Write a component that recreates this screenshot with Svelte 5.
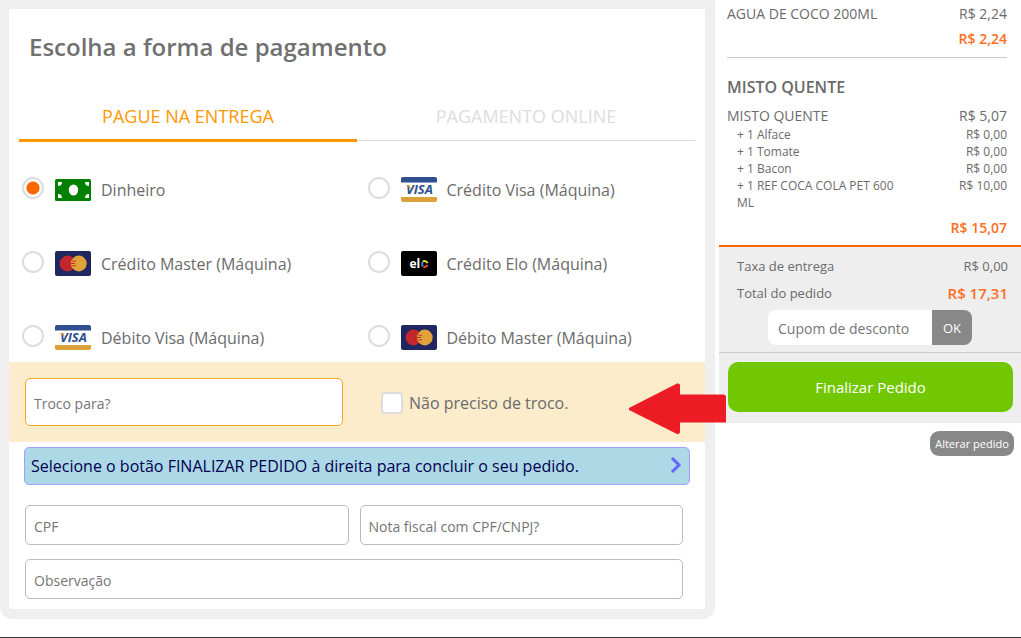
<script>
  const options = [
    { id: "dinheiro", label: "Dinheiro", brand: "cash" },
    { id: "credito-visa", label: "Crédito Visa (Máquina)", brand: "visa" },
    { id: "credito-master", label: "Crédito Master (Máquina)", brand: "master" },
    { id: "credito-elo", label: "Crédito Elo (Máquina)", brand: "elo" },
    { id: "debito-visa", label: "Débito Visa (Máquina)", brand: "visa" },
    { id: "debito-master", label: "Débito Master (Máquina)", brand: "master" },
  ];

  const extras = [
    { name: "+ 1 Alface", price: 0 },
    { name: "+ 1 Tomate", price: 0 },
    { name: "+ 1 Bacon", price: 0 },
    { name: "+ 1 REF COCA COLA PET 600 ML", price: 10 },
  ];

  let tab = $state("entrega");
  let selected = $state("dinheiro");
  let semTroco = $state(false);

  const brl = (n) => "R$ " + n.toFixed(2).replace(".", ",");
</script>

{#snippet icon(brand)}
  <svg class="brand" viewBox="0 0 36 25" width="36" height="25" aria-hidden="true">
    {#if brand === "cash"}
      <rect y="2" width="36" height="22" rx="1.5" fill="#008000" />
      <ellipse cx="18.500" cy="13" rx="4.700" ry="5.500" fill="#fff" />
      <path d="M3 5h4a4 4 0 0 1-4 4zM34 5h-4a4 4 0 0 0 4 4zM3 21h4a4 4 0 0 0-4-4zM34 21h-4a4 4 0 0 1 4-4z" fill="#fff" />
    {:else if brand === "visa"}
      <rect width="36" height="25" rx="2" fill="#fff" />
      <path d="M0 5.500V2a2 2 0 0 1 2-2h32a2 2 0 0 1 2 2v3.500z" fill="#2f4f8f" />
      <path d="M0 20v3a2 2 0 0 0 2 2h32a2 2 0 0 0 2-2v-3z" fill="#dba13a" />
      <text x="18.500" y="17.300" text-anchor="middle" class="visa">VISA</text>
      <path d="M4.500 8.300h3.200q1.200 0 1.400 1l.7 3.200q-1.600-3-5.300-4.200z" fill="#dba13a" />
    {:else if brand === "master"}
      <rect width="36" height="25" rx="2" fill="#20265f" />
      <circle cx="12.500" cy="12.500" r="7.900" fill="#c1272d" />
      <circle cx="23.800" cy="12.500" r="7.900" fill="#dfa339" />
      <path d="M17 10.200h4M16 12.500h4M17 14.800h4" stroke="#c1272d" stroke-width="1" />
      <path d="M16.500 11.300h3.500M16 13.700h4" stroke="#dfa339" stroke-width="1" />
    {:else}
      <rect width="36" height="25" rx="2" fill="#000" />
      <text x="8.500" y="16.500" class="elo">el</text>
      <g fill="none" stroke-width="2">
        <path d="M22.500 10.300a3.300 3.300 0 0 0-.3 5.200" stroke="#3a80d0" />
        <path d="M22 10.300a3.300 3.300 0 0 1 4.500 2" stroke="#f5df2e" />
        <path d="M26.500 13.800a3.300 3.300 0 0 1-4 2" stroke="#e8502a" />
      </g>
    {/if}
  </svg>
{/snippet}

<div class="page">
  <main class="card">
    <h1>Escolha a forma de pagamento</h1>

    <div class="tabs" role="tablist">
      <button role="tab" aria-selected={tab === "entrega"} class:active={tab === "entrega"} onclick={() => (tab = "entrega")}>PAGUE NA ENTREGA</button>
      <button role="tab" aria-selected={tab === "online"} class:active={tab === "online"} onclick={() => (tab = "online")}>PAGAMENTO ONLINE</button>
    </div>

    <div class="options" role="radiogroup" aria-label="Forma de pagamento">
      {#each options as o}
        <label class="option">
          <input type="radio" name="pagamento" value={o.id} bind:group={selected} />
          {@render icon(o.brand)}
          <span>{o.label}</span>
        </label>
      {/each}
    </div>

    <div class="change">
      <input class="field" type="text" placeholder="Troco para?" aria-label="Troco para?" />
      <label class="check">
        <input type="checkbox" bind:checked={semTroco} />
        <span>Não preciso de troco.</span>
      </label>
      <svg class="arrow" viewBox="0 0 97 52" width="97" height="52" aria-hidden="true">
        <path d="M0 25L48 0.500Q51 0 51 2V11.500H95L97 13V39.500H51V49Q51 51.500 48 51L0 27z" fill="#ed1c24" />
      </svg>
    </div>

    <a class="notice" href="#finalizar">
      <span>Selecione o botão FINALIZAR PEDIDO à direita para concluir o seu pedido.</span>
      <svg viewBox="0 0 12 18" width="12" height="18" aria-hidden="true">
        <path d="M2 1l7 7-7 7" fill="none" stroke="#6666ff" stroke-width="3" />
      </svg>
    </a>

    <div class="fields">
      <input class="field" type="text" placeholder="CPF" aria-label="CPF" />
      <input class="field" type="text" placeholder="Nota fiscal com CPF/CNPJ?" aria-label="Nota fiscal com CPF/CNPJ?" />
      <input class="field wide" type="text" placeholder="Observação" aria-label="Observação" />
    </div>
  </main>

  <aside>
    <section class="item">
      <div class="line"><span>AGUA DE COCO 200ML</span><span>{brl(2.24)}</span></div>
      <div class="subtotal">{brl(2.24)}</div>
    </section>
    <section class="item">
      <h2>MISTO QUENTE</h2>
      <div class="line"><span>MISTO QUENTE</span><span>{brl(5.07)}</span></div>
      <ul>
        {#each extras as e}
          <li><span>{e.name}</span><span>{brl(e.price)}</span></li>
        {/each}
      </ul>
      <div class="subtotal">{brl(15.07)}</div>
    </section>

    <div class="totals">
      <div class="row"><span>Taxa de entrega</span><span>{brl(0)}</span></div>
      <div class="row"><span>Total do pedido</span><strong>{brl(17.31)}</strong></div>
      <form class="coupon" onsubmit={(e) => e.preventDefault()}>
        <input type="text" placeholder="Cupom de desconto" aria-label="Cupom de desconto" />
        <button>OK</button>
      </form>
    </div>
    <div class="finish">
      <button id="finalizar">Finalizar Pedido</button>
    </div>
    <button class="edit">Alterar pedido</button>
  </aside>
</div>

<style>
  :global(body) { background: #fff; }
  .page {
    box-sizing: border-box;
    min-height: 100vh;
    display: grid;
    grid-template-columns: minmax(0, 1fr) 302px;
    gap: 4px;
    align-items: start;
    border-bottom: 1px solid #333;
    font-family: "Open Sans", "Noto Sans", sans-serif;
    color: #6b6b6b;
  }
  input, button { font-family: inherit; box-sizing: border-box; margin: 0; }
  button { border: 0; padding: 0; cursor: pointer; }

  .card { border: 10px solid #efefef; border-width: 9px 10px 10px 9px; border-radius: 0 0 12px 12px; }
  h1 { margin: 0; padding: 20px 20px 0; font-size: 24px; line-height: 36px; font-weight: 600; color: #707070; }

  .tabs { display: flex; margin: 24px 10px 0; }
  .tabs button {
    flex: 1;
    height: 53px;
    background: linear-gradient(#ddd, #ddd) 0 51px / 100% 1px no-repeat;
    font-size: 18px;
    color: #ddd;
  }
  .tabs button.active { background: linear-gradient(#ff9800, #ff9800) 0 50px / 100% 3px no-repeat; color: #ff9800; }

  .options { display: grid; grid-template-columns: 1fr 1fr; row-gap: 49px; padding: 35px 0 12px 13px; column-gap: 8px; }
  .option { display: flex; align-items: center; height: 25px; font-size: 16px; cursor: pointer; }
  .option input {
    appearance: none;
    flex: none;
    width: 22px;
    height: 22px;
    margin: 0 11px 4px 0;
    border: 2px solid #ddd;
    border-radius: 50%;
  }
  .option input:checked { background: radial-gradient(circle, #ff6600 6px, transparent 7px); }
  .brand { flex: none; margin-right: 10px; }
  .visa { font: italic 700 13px "Open Sans", sans-serif; fill: #2f4f8f; }
  .elo { font: 700 12px "Open Sans", sans-serif; fill: #fff; }

  .field {
    width: 100%;
    height: 40px;
    padding: 5px 8px 3px;
    border: 1px solid #bbb;
    border-radius: 5px;
    background: #fff;
    font-size: 14px;
    color: #555;
  }
  ::placeholder { color: #757575; opacity: 1; }

  .change {
    position: relative;
    display: grid;
    grid-template-columns: 318px 1fr;
    column-gap: 38px;
    align-items: center;
    height: 80px;
    padding: 0 16px;
    background: #fceccc;
  }
  .change .field { height: 48px; border-color: #f5a623; }
  .check { display: flex; align-items: center; gap: 6px; padding-top: 2px; font-size: 16px; cursor: pointer; }
  .check input { appearance: none; width: 22px; height: 22px; border: 2px solid #ddd; border-radius: 4px; background: #fff; }
  .check input:checked { background: #ff6600; }
  .arrow { position: absolute; right: -21px; top: 21px; }

  .notice {
    display: flex;
    align-items: center;
    justify-content: space-between;
    margin: 5px 15px 0;
    padding: 0 7px 0 6px;
    height: 36px;
    border: 1px solid #a0a0ff;
    border-radius: 5px;
    background: #add8e6;
    color: #000050;
    font-size: 16px;
    text-decoration: none;
  }
  .fields { display: grid; grid-template-columns: 1fr 1fr; gap: 14px 11px; padding: 20px 22px 10px 16px; }
  .wide { grid-column: 1 / -1; }

  .item { margin: 0 14px 0 8px; }
  .item + .item { border-top: 1px solid #ccc; margin-top: 8px; padding-top: 18px; }
  .line { display: flex; justify-content: space-between; font-size: 14px; line-height: 20px; }
  .item:first-child .line { padding-top: 4px; }
  h2 { margin: 0 0 8px; font-size: 16px; line-height: 22px; font-weight: 600; }
  .subtotal { text-align: right; font-size: 14px; line-height: 20px; font-weight: 600; color: #ff6d1f; margin-top: 5px; }
  ul { margin: 0; padding: 0 0 0 10px; list-style: none; font-size: 12px; line-height: 17px; }
  li { display: flex; justify-content: space-between; }
  li span:first-child { max-width: 166px; }
  ul + .subtotal { margin-top: 7px; }

  .totals { margin-top: 7px; border-top: 2px solid #ff6600; border-bottom: 1px solid #ccc; background: #eee; padding: 6px 0 7px; }
  .row { display: flex; justify-content: space-between; align-items: center; padding: 0 13px 0 18px; font-size: 13px; line-height: 27px; }
  .row strong { font-size: 15px; font-weight: 600; color: #ff6d1f; }
  .coupon { display: flex; width: 204px; margin: 3px auto 0; }
  .coupon input { flex: 1; min-width: 0; height: 35px; border: 0; border-radius: 8px 0 0 8px; padding: 2px 10px 0; font-size: 14px; background: #fff; }
  .coupon button { width: 40px; border-radius: 0 8px 8px 0; background: #888; color: #fff; font-size: 13px; }
  .finish { background: #eee; padding: 9px 8px 11px 9px; }
  .finish button { display: block; width: 100%; height: 50px; border-radius: 10px; background: #72c703; color: #fff; font-size: 15px; }
  .edit { display: block; margin: 8px 7px 0 auto; width: 84px; height: 25px; border-radius: 9px; background: #888; color: #fff; font-size: 11px; }
</style>
